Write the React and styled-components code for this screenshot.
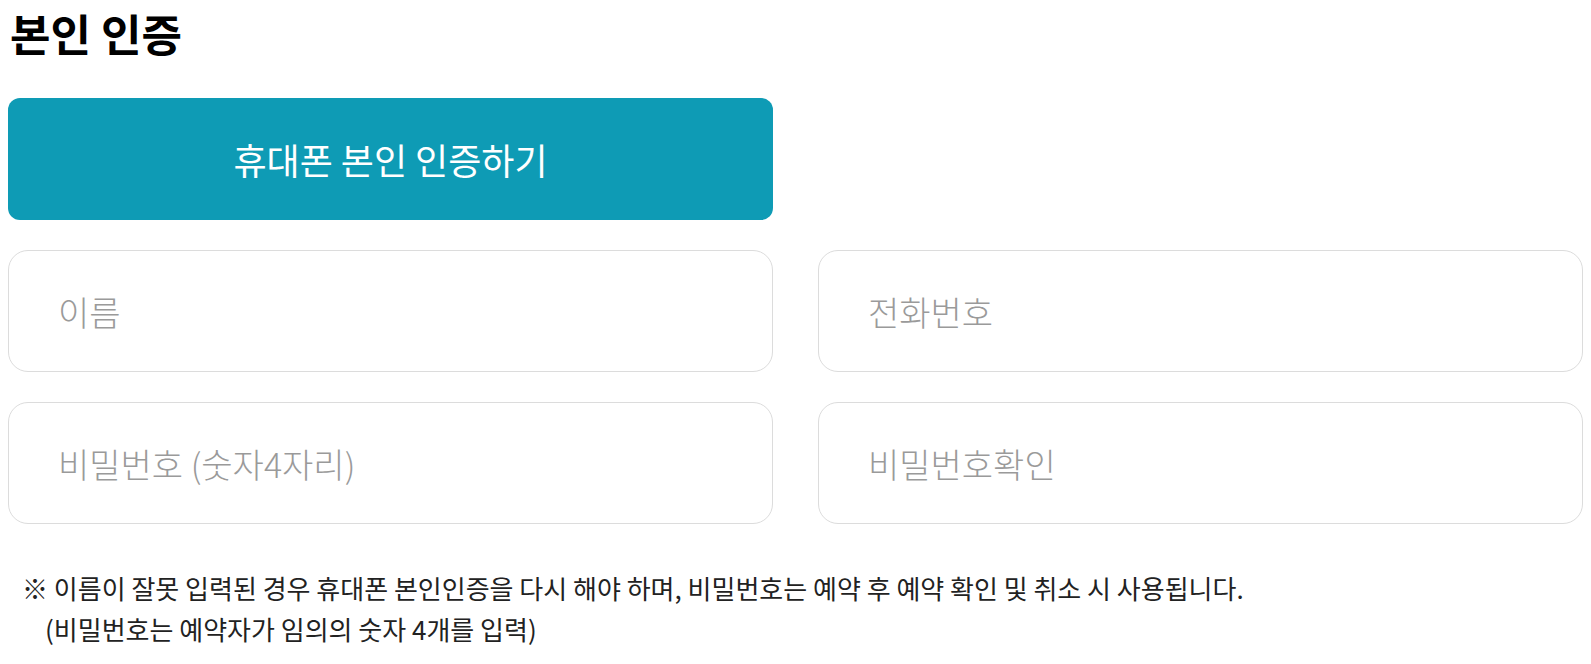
import React from "react";
import styled, { createGlobalStyle } from "styled-components";

const Global = createGlobalStyle`
  body {
    margin: 8px;
    background: #fff;
    font-family: "Noto Sans CJK KR", "Noto Sans", sans-serif;
    color: #111;
  }
`;

const Wrap = styled.section`
  width: 1575px;
`;

const Title = styled.h2`
  margin: 0 0 0 2px;
  font-size: 44px;
  font-weight: 700;
  line-height: 50px;
  color: #000;
`;

const Grid = styled.div`
  display: grid;
  grid-template-columns: 765px 765px;
  column-gap: 45px;
  row-gap: 30px;
  margin-top: 40px;
`;

const AuthButton = styled.button`
  height: 122px;
  border: none;
  border-radius: 12px;
  background: #0e9bb5;
  color: #fff;
  font-family: inherit;
  font-size: 36px;
  font-weight: 400;
  cursor: pointer;
`;

const Field = styled.input`
  box-sizing: border-box;
  height: 122px;
  width: 100%;
  border: 1px solid #dcdcdc;
  border-radius: 20px;
  padding: 0 49px;
  font-family: inherit;
  font-size: 34px;
  font-weight: 300;
  color: #333;
  outline: none;
  &::placeholder {
    color: #9a9a9a;
  }
`;

const Notes = styled.div`
  margin-top: 43px;
  padding-left: 14px;
  font-size: 26px;
  line-height: 41px;
  color: #222;
`;

const NoteLine = styled.p`
  margin: 0;
  padding-left: ${(p) => (p.$indent ? "23px" : "0")};
`;

export default function App() {
  return (
    <>
      <Global />
      <Wrap>
        <Title>본인 인증</Title>
        <Grid>
          <AuthButton type="button">휴대폰 본인 인증하기</AuthButton>
          <div />
          <Field placeholder="이름" />
          <Field placeholder="전화번호" />
          <Field placeholder="비밀번호 (숫자4자리)" type="password" />
          <Field placeholder="비밀번호확인" type="password" />
        </Grid>
        <Notes>
          <NoteLine>
            ※ 이름이 잘못 입력된 경우 휴대폰 본인인증을 다시 해야 하며, 비밀번호는 예약 후 예약 확인 및 취소 시 사용됩니다.
          </NoteLine>
          <NoteLine $indent>(비밀번호는 예약자가 임의의 숫자 4개를 입력)</NoteLine>
        </Notes>
      </Wrap>
    </>
  );
}
